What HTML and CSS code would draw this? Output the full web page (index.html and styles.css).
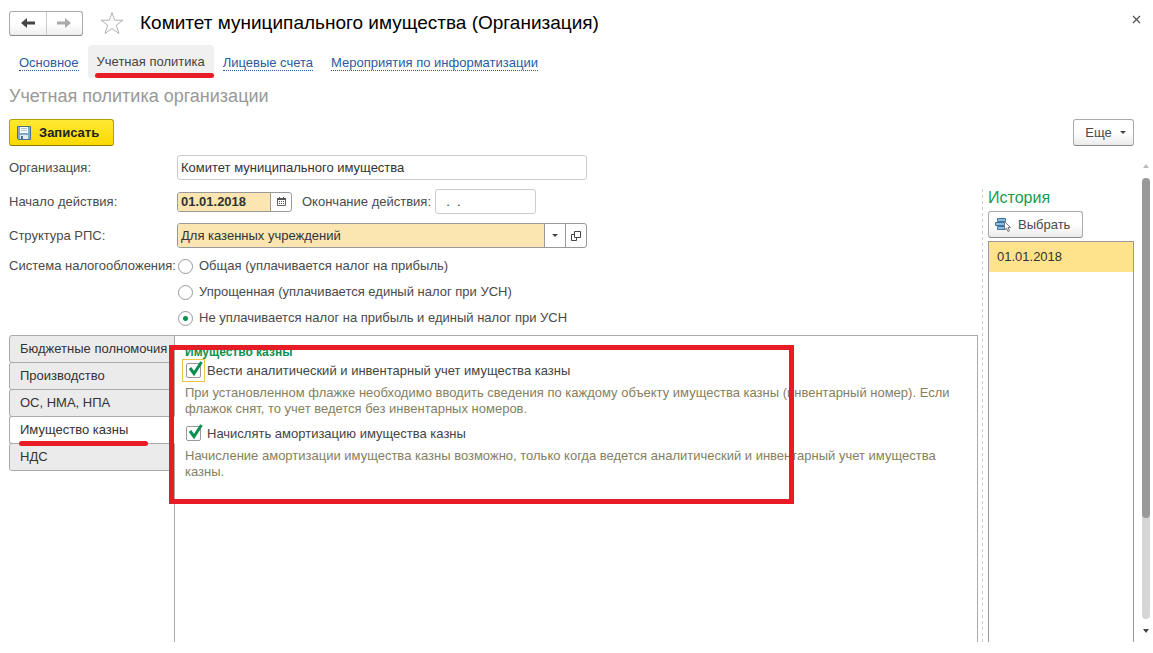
FILE: index.html
```
<!DOCTYPE html>
<html lang="ru">
<head>
    <meta charset="UTF-8">
    <meta name="viewport" content="width=device-width, initial-scale=1.0">
    <title>Комитет муниципального имущества (Организация)</title>
    <link rel="stylesheet" href="styles.css">
</head>
<body>

    <header class="titlebar">
        <div class="history-nav">
            <button type="button" aria-label="Назад">
                <svg width="16" height="12" viewBox="0 0 16 12"><path d="M1 6l6-5v3.500h8v3H7V11z" fill="#444"/></svg>
            </button>
            <button type="button" aria-label="Вперед">
                <svg width="16" height="12" viewBox="0 0 16 12"><path d="M15 6L9 1v3.500H1v3h8V11z" fill="#aaa"/></svg>
            </button>
        </div>
        <button type="button" class="star" aria-label="В избранное">
            <svg width="24" height="24" viewBox="0 0 24 24"><path d="M12 1.500l2.600 7.700H23l-6.700 5L19 22.500l-7-5-7 5 2.700-8.300L1 9.200h8.400z" fill="#fff" stroke="#b0b0b0"/></svg>
        </button>
        <h1>Комитет муниципального имущества (Организация)</h1>
        <button type="button" class="close" aria-label="Закрыть">
            <svg width="9" height="9" viewBox="0 0 9 9"><path d="M1 1l7 7M8 1L1 8" stroke="#555" stroke-width="1.300"/></svg>
        </button>
    </header>

    <nav class="sections">
        <a href="#">Основное</a>
        <a href="#" class="current">Учетная политика</a>
        <a href="#">Лицевые счета</a>
        <a href="#">Мероприятия по информатизации</a>
    </nav>

    <h2>Учетная политика организации</h2>

    <div class="commands">
        <button type="button" class="btn save">
            <svg width="14" height="14" viewBox="0 0 14 14">
                <path d="M.5.5h13v13h-12l-1-1z" fill="#7fa8ca" stroke="#49708f"/>
                <path d="M3 1h8v6H3z" fill="#fff"/>
                <path d="M4 2.500h6M4 4.500h6" stroke="#a9bfce"/>
                <path d="M3 9h8v4H3z" fill="#e3edf3"/>
                <path d="M4 10h2v3H4z" fill="#49708f"/>
            </svg>
            Записать
        </button>
        <button type="button" class="btn more">Еще <span class="arrow"></span></button>
    </div>

    <main>
        <form class="policy">
            <!-- Main fields -->
            <div class="row">
                <label class="name" for="org">Организация:</label>
                <input type="text" class="field" id="org" value="Комитет муниципального имущества">
            </div>

            <div class="row">
                <label class="name" for="start">Начало действия:</label>
                <div class="combo date">
                    <input type="text" id="start" value="01.01.2018">
                    <button type="button" aria-label="Выбрать дату">
                        <svg width="9" height="9" viewBox="0 0 9 9"><path d="M.5 1.500h8v7h-8z" fill="#fff" stroke="#666"/><path d="M0 1h9v2H0zM2 0h1v1H2zM6 0h1v1H6zM2 4h1v1H2zM4 4h1v1H4zM6 4h1v1H6zM2 6h1v1H2zM4 6h1v1H4zM6 6h1v1H6z" fill="#555"/></svg>
                    </button>
                </div>
                <label class="end-name" for="end">Окончание действия:</label>
                <input type="text" class="field end" id="end" value="&nbsp; .&nbsp; .">
            </div>

            <div class="row">
                <label class="name" for="rps">Структура РПС:</label>
                <div class="combo">
                    <select id="rps">
                        <option>Для казенных учреждений</option>
                    </select>
                    <button type="button" aria-label="Список"><span class="arrow"></span></button>
                    <button type="button" aria-label="Открыть">
                        <svg width="10" height="10" viewBox="0 0 10 10" fill="none" stroke="#444"><path d="M3.500.5h6v6h-6zM3.500 3.500h-3v6h5v-3"/></svg>
                    </button>
                </div>
            </div>

            <div class="row taxes">
                <span class="name" id="tax-name">Система налогообложения:</span>
                <div class="radios" role="radiogroup" aria-labelledby="tax-name">
                    <label><input type="radio" name="tax">Общая (уплачивается налог на прибыль)</label>
                    <label><input type="radio" name="tax">Упрощенная (уплачивается единый налог при УСН)</label>
                    <label><input type="radio" name="tax" checked>Не уплачивается налог на прибыль и единый налог при УСН</label>
                </div>
            </div>

            <!-- Vertical tabs -->
            <div class="pages">
                <div class="tabs" role="tablist">
                    <button type="button" role="tab">Бюджетные полномочия</button>
                    <button type="button" role="tab">Производство</button>
                    <button type="button" role="tab">ОС, НМА, НПА</button>
                    <button type="button" role="tab" class="active" aria-selected="true">Имущество казны</button>
                    <button type="button" role="tab">НДС</button>
                </div>
                <div class="panel" role="tabpanel">
                    <h3>Имущество казны</h3>
                    <label class="check">
                        <span class="box focused">
                            <input type="checkbox" checked>
                            <svg width="17" height="17" viewBox="0 0 17 17"><path d="M3 8l4 5.500L14.500 2" fill="none" stroke="#0a9150" stroke-width="3"/></svg>
                        </span>
                        Вести аналитический и инвентарный учет имущества казны
                    </label>
                    <p>При установленном флажке необходимо вводить сведения по каждому объекту имущества казны (инвентарный номер). Если флажок снят, то учет ведется без инвентарных номеров.</p>
                    <label class="check">
                        <span class="box">
                            <input type="checkbox" checked>
                            <svg width="17" height="17" viewBox="0 0 17 17"><path d="M3 8l4 5.500L14.500 2" fill="none" stroke="#0a9150" stroke-width="3"/></svg>
                        </span>
                        Начислять амортизацию имущества казны
                    </label>
                    <p>Начисление амортизации имущества казны возможно, только когда ведется аналитический и инвентарный учет имущества казны.</p>
                    <div class="frame"></div>
                </div>
            </div>
        </form>

        <aside class="log">
            <h4>История</h4>
            <button type="button" class="btn pick">
                <svg width="16" height="14" viewBox="0 0 16 14">
                    <path d="M2.500.5h8v3h-8zM.5 4.500h9v3h-9zM2.500 8.500h8v3h-8z" fill="#8dbbe0" stroke="#41749f"/>
                    <path d="M9.500 3.500v8.500l2-2 1.500 3.500 1.500-.700-1.500-3.300h2.500z" fill="#fff" stroke="#777"/>
                </svg>
                Выбрать
            </button>
            <ul>
                <li>01.01.2018</li>
            </ul>
        </aside>

        <div class="scroll" aria-hidden="true">
            <span class="up"></span>
            <div class="track"><div class="thumb"></div></div>
            <span class="arrow"></span>
        </div>
    </main>

</body>
</html>
```
FILE: styles.css
```
* {
    box-sizing: border-box;
}

body {
    display: flex;
    flex-direction: column;
    height: 100vh;
    margin: 0;
    padding: 9px 3px 11px 9px;
    background-color: #fff;
    color: #4a4a4a;
    font-family: "Liberation Sans", Arial, sans-serif;
    font-size: 13px;
    line-height: 16px;
}

button, input, select {
    margin: 0;
    font: inherit;
    color: inherit;
}

button {
    display: flex;
    justify-content: center;
    align-items: center;
    padding: 0;
    border: none;
    background: none;
    cursor: pointer;
}

h1, h2, h3, h4, p, ul {
    margin: 0;
    padding: 0;
    font-weight: normal;
}

svg {
    display: block;
    flex: none;
}

/* Title */
.titlebar {
    display: flex;
    align-items: center;
    height: 28px;
    padding-right: 6px;
}

.history-nav {
    display: flex;
    width: 74px;
    height: 25px;
    border: 1px solid #aaa;
    border-bottom-color: #888;
    border-radius: 3px;
    background: linear-gradient(#fff 50%, #eee);
}

.history-nav button {
    flex: 1;
}

.history-nav button + button {
    border-left: 1px solid #ccc;
}

.star {
    margin: 0 16px 0 17px;
}

h1 {
    color: #000;
    font-size: 19px;
    line-height: 24px;
}

.close {
    align-self: flex-start;
    width: 15px;
    height: 21px;
    margin-left: auto;
}

/* Sections */
.sections {
    display: flex;
    align-items: center;
    gap: 18px;
    height: 33px;
    margin-top: 8px;
    padding-left: 10px;
}

.sections a {
    padding-top: 2px;
    border-bottom: 1px dotted #2c5aa0;
    color: #2c5aa0;
    line-height: 15px;
    text-decoration: none;
}

.sections .current {
    position: relative;
    margin: 0 -9px;
    padding: 1px 9px 0;
    border: none;
    border-radius: 4px;
    background-color: #f0f0f0;
    color: #444;
    line-height: 32px;
}

.sections .current::after,
.tabs .active::after {
    content: "";
    position: absolute;
    bottom: 0;
    left: 7px;
    right: 0;
    height: 5px;
    border-radius: 3px;
    background-color: #e81c27;
}

h2 {
    margin-top: 5px;
    color: #999;
    font-size: 18px;
    line-height: 26px;
}

/* Commands */
.commands {
    display: flex;
    justify-content: space-between;
    margin-top: 10px;
    padding-right: 16px;
}

.btn {
    gap: 8px;
    height: 27px;
    border: 1px solid #aaa;
    border-bottom-color: #888;
    border-radius: 3px;
    background: linear-gradient(#fff 50%, #ebebeb);
}

.save {
    justify-content: flex-start;
    width: 105px;
    padding-left: 7px;
    border-color: #b5a000;
    border-bottom-color: #8d7c00;
    background: linear-gradient(#ffe934, #fbd900);
    color: #222;
    font-weight: bold;
}

.more {
    width: 61px;
    padding-left: 4px;
}

.arrow {
    border: 3px solid transparent;
    border-top-color: #444;
    border-bottom: none;
}

/* Work area */
main {
    display: flex;
    flex: 1;
    min-height: 0;
    margin-top: 9px;
}

.policy {
    display: flex;
    flex-direction: column;
    flex: 1;
    min-width: 0;
}

.row {
    display: flex;
    align-items: center;
    height: 25px;
    margin-bottom: 9px;
}

.name {
    width: 168px;
    white-space: nowrap;
}

.field {
    width: 410px;
    height: 25px;
    padding: 0 3px;
    border: 1px solid #ccc;
    border-radius: 3px;
    color: #333;
}

.end-name {
    margin: 0 4px 0 10px;
}

.end {
    width: 101px;
}

.combo {
    display: flex;
    width: 410px;
    height: 25px;
    border: 1px solid #999;
    border-radius: 3px;
    overflow: hidden;
}

.combo input,
.combo select {
    flex: 1;
    min-width: 0;
    padding: 0 3px;
    border: none;
    border-radius: 0;
    appearance: none;
    background-color: #fbe6b2;
    color: #333;
}

.combo button {
    width: 21px;
    border-left: 1px solid #999;
}

.date {
    width: 115px;
    height: 20px;
    font-weight: bold;
}

.taxes {
    align-items: flex-start;
    height: auto;
    padding-top: 1px;
}

.radios label {
    display: flex;
    align-items: center;
    height: 16px;
    margin-bottom: 10px;
}

.radios label:last-child {
    margin-bottom: 0;
}

.radios input {
    width: 15px;
    height: 15px;
    margin: 0 6px 0 1px;
    border: 1px solid #999;
    border-radius: 50%;
    appearance: none;
}

.radios input:checked {
    background: radial-gradient(circle, #0a9150 2px, #fff 3px);
}

/* Tabs */
.pages {
    display: flex;
    flex: 1;
    min-height: 0;
    margin-right: 4px;
}

.tabs {
    width: 166px;
}

.tabs button {
    position: relative;
    justify-content: flex-start;
    width: 100%;
    height: 28px;
    margin-bottom: -1px;
    padding-left: 10px;
    border: 1px solid #aaa;
    border-radius: 3px 0 0 3px;
    background-color: #ebebeb;
    color: #333;
    white-space: nowrap;
}

.tabs .active {
    z-index: 1;
    border-right-color: #fff;
    background-color: #fff;
}

.tabs .active::after {
    bottom: -3px;
    left: 9px;
    right: 26px;
}

.panel {
    position: relative;
    flex: 1;
    min-width: 0;
    margin-left: -1px;
    padding: 8px 24px 0 10px;
    border: 1px solid #aaa;
    border-bottom: none;
}

.panel h3 {
    color: #0a9150;
    font-size: 12px;
    font-weight: bold;
}

.check {
    display: flex;
    align-items: center;
    height: 21px;
    color: #444;
}

.box {
    position: relative;
    width: 15px;
    height: 15px;
    margin: 0 6px 0 1px;
}

.focused {
    outline: 1px solid #e8c648;
    outline-offset: 3px;
}

.box input {
    display: block;
    width: 15px;
    height: 15px;
    border: 1px solid #999;
    border-radius: 2px;
    appearance: none;
}

.box svg {
    position: absolute;
    top: -3px;
    left: 1px;
    pointer-events: none;
}

.panel p {
    margin: 4px 0 6px;
    color: #84805f;
}

/* Red frame over the panel */
.frame {
    position: absolute;
    z-index: 2;
    top: 9px;
    left: -6px;
    width: 625px;
    height: 159px;
    border: 5px solid #e81c27;
    pointer-events: none;
}

/* History */
.log {
    display: flex;
    flex-direction: column;
    width: 152px;
    margin-top: 34px;
    padding-left: 6px;
    background: repeating-linear-gradient(#ccc 0 3px, #fff 3px 6px) no-repeat left / 1px 100%;
}

.log h4 {
    color: #169c50;
    font-size: 16px;
    line-height: 18px;
}

.pick {
    justify-content: flex-start;
    width: 95px;
    margin: 4px 0 3px;
    padding-left: 6px;
    gap: 7px;
}

.log ul {
    flex: 1;
    border: 1px solid #999;
    border-bottom: none;
    list-style: none;
}

.log li {
    padding: 7px 8px;
    background-color: #fee38c;
    color: #333;
}

/* Scrollbar */
.scroll {
    display: flex;
    flex-direction: column;
    align-items: center;
    width: 8px;
    margin-left: 8px;
    padding: 9px 0;
}

.up {
    border: 3px solid transparent;
    border-bottom: 4px solid #bbb;
    border-top: none;
}

.scroll .arrow {
    border-top-width: 4px;
}

.track {
    flex: 1;
    width: 8px;
    margin: 10px 0;
    border-radius: 4px;
    background-color: #d5d5d5;
}

.thumb {
    height: 77%;
    border-radius: 4px;
    background-color: #999;
}
```
